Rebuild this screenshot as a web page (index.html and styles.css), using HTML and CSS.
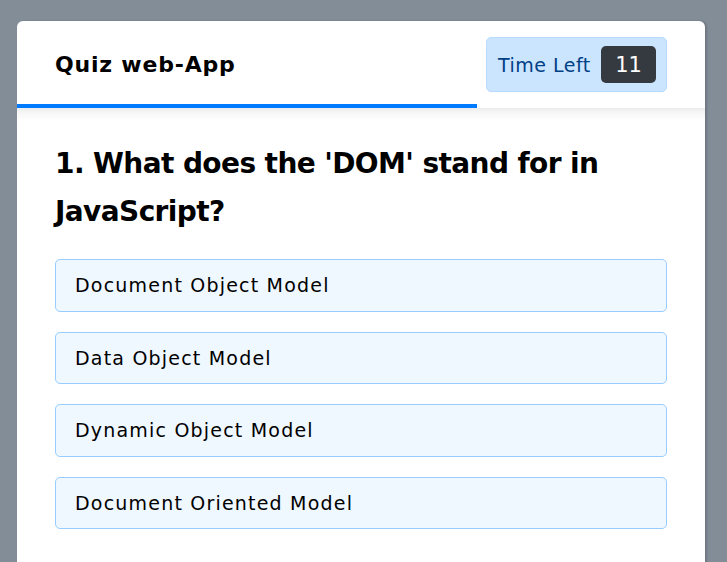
FILE: index.html
```html
<!DOCTYPE html>
<html>
<head>
<meta charset="utf-8">
<link rel="stylesheet" href="styles.css">
</head>
<body>
<div class="card">
  <div class="card-header">
    <div class="header-row">
      <h1 class="title">Quiz web-App</h1>
      <div class="timer">
        <span class="timer-label">Time Left</span>
        <span class="timer-badge">11</span>
      </div>
    </div>
  </div>
  <div class="progress"><div class="progress-fill" style="width: 66.9%"></div></div>
  <div class="card-body">
    <h2 class="question">1. What does the 'DOM' stand for in JavaScript?</h2>
    <ul class="options">
      <li class="option">Document Object Model</li>
      <li class="option">Data Object Model</li>
      <li class="option">Dynamic Object Model</li>
      <li class="option">Document Oriented Model</li>
    </ul>
  </div>
</div>
</body>
</html>
```
FILE: styles.css
```css
* { box-sizing: border-box; }
html, body { margin: 0; padding: 0; }
body {
  background: #838d98;
  font-family: "DejaVu Sans", "Noto Sans", sans-serif;
  color: #000;
  height: 562px;
  overflow: hidden;
  padding: 21px 22px 0 17px;
}
.card {
  background: #fff;
  border-radius: 6px 6px 0 0;
  width: 688px;
  min-height: 600px;
  box-shadow: 2px 0 2px rgba(0,0,0,0.15);
}
.card-header {
  padding: 16px 38px 12px 38px;
}
.header-row {
  display: flex;
  justify-content: space-between;
  align-items: center;
}
.title {
  margin: 0;
  font-size: 22px;
  font-weight: 600;
  letter-spacing: 0.8px;
}
.timer {
  display: flex;
  align-items: center;
  height: 55px;
  width: 181px;
  padding: 0 10px 0 11px;
  background: #cce5ff;
  border: 1px solid #b8daff;
  border-radius: 5px;
  justify-content: space-between;
}
.timer-label {
  color: #004085;
  font-size: 19px;
  letter-spacing: 0.5px;
}
.timer-badge {
  background: #343a40;
  color: #fff;
  border-radius: 5px;
  width: 55px;
  height: 37px;
  display: flex;
  align-items: center;
  justify-content: center;
  font-size: 21px;
  font-weight: 500;
}
.progress {
  height: 4px;
  background: transparent;
  position: relative;
  z-index: 1;
}
.progress-fill {
  height: 4px;
  background: #007bff;
}
.card-body {
  padding: 32px 38px 0 38px;
  background: linear-gradient(to bottom, #ececec 0, #f7f7f7 5px, #fff 13px);
}
.question {
  margin: 0;
  font-size: 28px;
  font-weight: 600;
  line-height: 48px;
  letter-spacing: -0.6px;
}
.options {
  list-style: none;
  margin: 23px 0 0 0;
  padding: 0;
  display: flex;
  flex-direction: column;
  gap: 20px;
}
.option {
  background: #eff7ff;
  border: 1px solid #99cdff;
  border-radius: 5px;
  padding: 12px 19px;
  font-size: 19px;
  line-height: 26.5px;
  letter-spacing: 1.2px;
}
```
